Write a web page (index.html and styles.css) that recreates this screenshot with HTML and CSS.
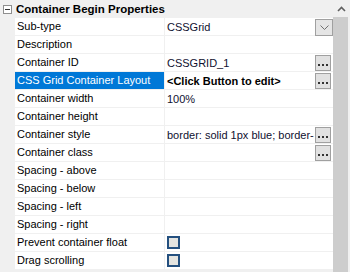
FILE: index.html
```html
<!DOCTYPE html>
<html lang="en">
<head>
	<meta charset="UTF-8">
	<title>Container Begin Properties</title>
	<link rel="stylesheet" href="styles.css">
</head>
<body>
	<div class="grid">
		<div class="props">
			<div class="cat">
				<span class="toggle"></span>
				<span class="cat-name">Container Begin Properties</span>
			</div>
			<div class="row">
				<div class="name">Sub-type</div>
				<div class="val">CSSGrid
					<span class="drop"><svg width="9" height="5" viewBox="0 0 9 5"><path d="M0.5 0.5 L4.5 4.5 L8.5 0.5" fill="none" stroke="#707070"/></svg></span>
				</div>
			</div>
			<div class="row">
				<div class="name">Description</div>
				<div class="val"></div>
			</div>
			<div class="row">
				<div class="name">Container ID</div>
				<div class="val">CSSGRID_1<span class="dots"><svg width="10" height="2" viewBox="0 0 10 2"><rect x="0" y="0" width="2" height="2" fill="#333"/><rect x="4" y="0" width="2" height="2" fill="#333"/><rect x="8" y="0" width="2" height="2" fill="#333"/></svg></span></div>
			</div>
			<div class="row sel">
				<div class="name">CSS Grid Container Layout</div>
				<div class="val bold">&lt;Click Button to edit&gt;<span class="dots"><svg width="10" height="2" viewBox="0 0 10 2"><rect x="0" y="0" width="2" height="2" fill="#333"/><rect x="4" y="0" width="2" height="2" fill="#333"/><rect x="8" y="0" width="2" height="2" fill="#333"/></svg></span></div>
			</div>
			<div class="row">
				<div class="name">Container width</div>
				<div class="val">100%</div>
			</div>
			<div class="row">
				<div class="name">Container height</div>
				<div class="val"></div>
			</div>
			<div class="row">
				<div class="name">Container style</div>
				<div class="val"><span class="clip">border: solid 1px blue; border-radius: 4px</span><span class="dots"><svg width="10" height="2" viewBox="0 0 10 2"><rect x="0" y="0" width="2" height="2" fill="#333"/><rect x="4" y="0" width="2" height="2" fill="#333"/><rect x="8" y="0" width="2" height="2" fill="#333"/></svg></span></div>
			</div>
			<div class="row">
				<div class="name">Container class</div>
				<div class="val"><span class="dots"><svg width="10" height="2" viewBox="0 0 10 2"><rect x="0" y="0" width="2" height="2" fill="#333"/><rect x="4" y="0" width="2" height="2" fill="#333"/><rect x="8" y="0" width="2" height="2" fill="#333"/></svg></span></div>
			</div>
			<div class="row">
				<div class="name">Spacing - above</div>
				<div class="val"></div>
			</div>
			<div class="row">
				<div class="name">Spacing - below</div>
				<div class="val"></div>
			</div>
			<div class="row">
				<div class="name">Spacing - left</div>
				<div class="val"></div>
			</div>
			<div class="row">
				<div class="name">Spacing - right</div>
				<div class="val"></div>
			</div>
			<div class="row">
				<div class="name">Prevent container float</div>
				<div class="val"><span class="check"></span></div>
			</div>
			<div class="row">
				<div class="name">Drag scrolling</div>
				<div class="val"><span class="check"></span></div>
			</div>
		</div>
		<div class="scroll">
			<div class="arrow"><svg width="9" height="6" viewBox="0 0 9 6"><path d="M1 5 L4.5 1.5 L8 5" fill="none" stroke="#606060" stroke-width="1.6"/></svg></div>
			<div class="thumb"></div>
		</div>
	</div>
</body>
</html>
```
FILE: styles.css
```css
*{margin:0;padding:0;box-sizing:border-box;}
body{font-family:"Liberation Sans",Arial,sans-serif;font-size:11px;color:#000;background:#fff;}
.grid{display:flex;width:350px;height:272px;overflow:hidden;}
.props{width:333px;background:#f0f0f0;}
.cat{height:18px;display:flex;align-items:center;}
.toggle{width:9px;height:9px;margin:0 4px 0 3px;border:1px solid #8e8e8e;background:#fff;display:flex;align-items:center;justify-content:center;}
.toggle:after{content:"";width:5px;height:1px;background:#333;}
.cat-name{font-weight:bold;font-size:11.5px;}
.row{display:flex;height:18px;margin-left:15px;background:#fff;border-bottom:1px solid #f0f0f0;}
.name{width:150px;padding-left:2px;line-height:17px;border-right:1px solid #f0f0f0;white-space:nowrap;overflow:hidden;}
.val{flex:1;display:flex;align-items:center;padding-left:2px;color:#101030;white-space:nowrap;position:relative;}
.bold{font-weight:bold;color:#000;}
.sel .name{background:#0078d7;color:#fff;}
.clip{overflow:hidden;width:147px;flex:none;}
.dots{position:absolute;right:2px;top:1px;width:16px;height:16px;border:1px solid #a0a0a0;background:#e1e1e1;display:flex;align-items:flex-end;justify-content:center;padding-bottom:4px;}
.drop{position:absolute;right:0;top:1px;width:18px;height:17px;border:1px solid #a0a0a0;background:#e5e5e5;display:flex;align-items:center;justify-content:center;}
.check{width:13px;height:13px;border:2px solid #24507f;background:#e4e4e0;}
.scroll{width:17px;background:#f0f0f0;}
.arrow{height:17px;display:flex;align-items:center;justify-content:center;}
.thumb{width:15px;height:255px;background:#cdcdcd;}
```
